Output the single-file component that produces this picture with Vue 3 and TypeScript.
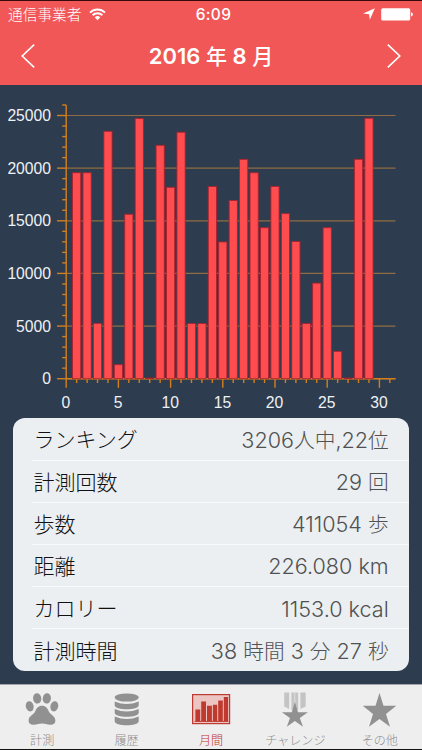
<script setup lang="ts">
interface Stat { label: string; value: string }
interface Run { text: string; latin: boolean }

const UNIT_X = 10.44
const UNIT_Y = 52.64 / 5000
const ORIGIN_X = 66.2
const ORIGIN_Y = 293.7

const steps: number[] = [
  19560, 19560, 5260, 23500, 1330, 15620, 24720, 60, 22170, 18180,
  23410, 5240, 5240, 18250, 12990, 16930, 20840, 19560, 14340, 18260,
  15680, 13030, 5240, 9080, 14340, 2600, 60, 20840, 24740,
]

const px = (day: number): number => ORIGIN_X + day * UNIT_X
const py = (count: number): number => ORIGIN_Y - count * UNIT_Y

const yMajor: number[] = [0, 5000, 10000, 15000, 20000, 25000]
const yMinor: number[] = Array.from({ length: 27 }, (_, i) => i * 1000).filter(v => v % 5000 !== 0)
const xMajor: number[] = [0, 5, 10, 15, 20, 25, 30]
const xMinor: number[] = Array.from({ length: 32 }, (_, i) => i).filter(v => v % 5 !== 0)

const stats: Stat[] = [
  { label: 'ランキング', value: '3206人中,22位' },
  { label: '計測回数', value: '29 回' },
  { label: '歩数', value: '411054 歩' },
  { label: '距離', value: '226.080 km' },
  { label: 'カロリー', value: '1153.0 kcal' },
  { label: '計測時間', value: '38 時間 3 分 27 秒' },
]

/** Splits a value into Latin and Japanese runs, which are set at different sizes. */
const runs = (value: string): Run[] =>
  (value.match(/[ -~]+|[^ -~]+/g) ?? []).map(text => ({ text, latin: /^[ -~]/.test(text) }))
</script>

<template>
  <div class="screen">
    <header class="header">
      <div class="status">
        <div class="carrier">
          <span>通信事業者</span>
          <svg class="wifi" width="17" height="13" viewBox="0 0 17 13">
            <path d="M1 4.6A10.6 10.6 0 0 1 16 4.6M3.6 7.3A7 7 0 0 1 13.4 7.3" fill="none" stroke="#fff" stroke-width="1.9" />
            <path d="M5.7 9.3A4 4 0 0 1 11.3 9.3L8.5 12.2Z" fill="#fff" />
          </svg>
        </div>
        <span class="clock">6:09</span>
        <div class="power">
          <svg width="12" height="12" viewBox="0 0 12 12"><path d="M11.9.2 6.8 11.8 6.1 6.2.1 5.5Z" fill="#fff" /></svg>
          <svg width="33" height="13" viewBox="0 0 33 13">
            <rect x="0.2" y="0.2" width="29" height="12.4" rx="1.6" fill="#fff" />
            <path d="M30 4.3Q31.9 4.8 31.9 6.4T30 8.5Z" fill="#fff" />
          </svg>
        </div>
      </div>
      <div class="nav">
        <svg width="14" height="24" viewBox="0 0 14 24"><path d="M13.2.6 1.2 12 13.2 23.4" fill="none" stroke="#fff" stroke-width="1.6" /></svg>
        <h1 class="title">2016 <span class="kanji">年</span> 8 <span class="kanji">月</span></h1>
        <svg width="14" height="24" viewBox="0 0 14 24"><path d="M.8.6 12.8 12 .8 23.4" fill="none" stroke="#fff" stroke-width="1.6" /></svg>
      </div>
    </header>

    <svg class="chart" width="422" height="333" viewBox="0 0 422 333">
      <g stroke="#8f6c43" stroke-width="1.2">
        <line v-for="v in yMajor" :key="v" :x1="ORIGIN_X" x2="395.5" :y1="py(v)" :y2="py(v)" />
      </g>
      <g stroke="#d27f1c" stroke-width="1.4">
        <line :x1="ORIGIN_X" :x2="ORIGIN_X" :y1="py(26000)" :y2="ORIGIN_Y" />
        <line :x1="ORIGIN_X" x2="395.5" :y1="ORIGIN_Y" :y2="ORIGIN_Y" />
        <line v-for="v in yMajor" :key="'y' + v" x1="57" :x2="ORIGIN_X" :y1="py(v)" :y2="py(v)" />
        <line v-for="v in yMinor" :key="'m' + v" x1="62.2" :x2="ORIGIN_X" :y1="py(v)" :y2="py(v)" />
        <line v-for="v in xMajor" :key="'x' + v" :x1="px(v)" :x2="px(v)" :y1="ORIGIN_Y" y2="302.8" />
        <line v-for="v in xMinor" :key="'n' + v" :x1="px(v)" :x2="px(v)" :y1="ORIGIN_Y" y2="298" />
      </g>
      <g fill="#ff4c4f" stroke="#a82431" stroke-width="0.9">
        <rect v-for="(v, i) in steps" :key="i" :x="px(i + 1) - 4.1" :y="py(v)" width="8.2" :height="v * UNIT_Y" />
      </g>
      <g class="axis" text-anchor="end">
        <text v-for="v in yMajor" :key="v" x="51" :y="py(v) + 5.7">{{ v }}</text>
      </g>
      <g class="axis" text-anchor="middle">
        <text v-for="v in xMajor" :key="v" :x="px(v) - 0.4" y="323.2">{{ v }}</text>
      </g>
    </svg>

    <section class="card">
      <div v-for="s in stats" :key="s.label" class="row">
        <span class="label">{{ s.label }}</span>
        <span class="value"><span v-for="(r, i) in runs(s.value)" :key="i" :class="{ latin: r.latin }">{{ r.text }}</span></span>
      </div>
    </section>

    <nav class="tabs">
      <div class="tab">
        <svg width="40" height="38" viewBox="0 0 40 38" fill="#919191">
          <ellipse cx="7.7" cy="17.3" rx="3.9" ry="5.2" transform="rotate(-14 7.7 17.3)" />
          <ellipse cx="15.2" cy="9.4" rx="4.1" ry="5.2" transform="rotate(-7 15.2 9.4)" />
          <ellipse cx="24.8" cy="9.4" rx="4.1" ry="5.2" transform="rotate(7 24.8 9.4)" />
          <ellipse cx="32.3" cy="17.3" rx="3.9" ry="5.2" transform="rotate(14 32.3 17.3)" />
          <path d="M20 16.8c3.6 0 5.5 2.4 6.7 5.5 1.5 3.6 6.7 4.6 6.7 9.2 0 3.1-2.4 4.6-5.5 4.3-3-.3-4.6-1.2-7.9-1.2s-4.9.9-7.9 1.2C9 36.1 6.6 34.6 6.6 31.5c0-4.6 5.2-5.6 6.7-9.2 1.2-3.1 3.1-5.5 6.7-5.5z" />
        </svg>
        <span>計測</span>
      </div>
      <div class="tab">
        <svg width="40" height="38" viewBox="0 0 40 38" fill="#919191">
          <ellipse cx="19.7" cy="8.5" rx="12" ry="4.1" />
          <path d="M7.7 12.4Q19.7 17.7 31.7 12.4V16.2C31.7 21.5 7.7 21.5 7.7 16.2Z" />
          <path d="M7.7 19.9Q19.7 25.2 31.7 19.9V23.7C31.7 29 7.7 29 7.7 23.7Z" />
          <path d="M7.7 27.4Q19.7 32.7 31.7 27.4V32.2C31.7 37.5 7.7 37.5 7.7 32.2Z" />
        </svg>
        <span>履歴</span>
      </div>
      <div class="tab active">
        <svg width="40" height="38" viewBox="0 0 40 38">
          <rect x="1.6" y="5.6" width="37" height="29" fill="#ecc5c3" stroke="#bd3a30" stroke-width="1.2" />
          <path d="M4.4 20.5H9.2V31.9H4.4ZM10.2 12.6H15V31.9H10.2ZM16 16.8H20.9V31.9H16ZM21.9 15.7H26.2V31.9H21.9ZM27.2 11.5H31.8V31.9H27.2ZM32.8 7.9H37.1V31.9H32.8Z" fill="#bf392e" />
          <path d="M3.6 32.4H37.4" stroke="#bf392e" stroke-width="1" />
        </svg>
        <span>月間</span>
      </div>
      <div class="tab">
        <svg width="40" height="38" viewBox="0 0 40 38">
          <path d="M9.2 3.4H14.2V20L9.2 17.5ZM16.4 3.4H23.2V21H16.4ZM25.4 3.4H30.7V17.5L25.4 20Z" fill="#c4c4c4" />
          <path d="M19.8 3.4V20" stroke="#e5e5e5" stroke-width=".8" />
          <path d="M19.9 13 23 23.2H32.9L24.8 29.1 28 37.8 19.9 32 11.8 37.8 15 29.1 6.9 23.2H16.8Z" fill="#919191" />
        </svg>
        <span>チャレンジ</span>
      </div>
      <div class="tab">
        <svg width="40" height="38" viewBox="0 0 40 38" fill="#919191">
          <path d="M19.5 4 23.5 16.7H36.3L26 24.9 30 37.7 19.5 29.9 9 37.7 13 24.9 2.7 16.7H15.5Z" />
        </svg>
        <span>その他</span>
      </div>
    </nav>
  </div>
</template>

<style>
body { margin: 0; background: #2d3c4e; }
</style>

<style scoped>
* { box-sizing: border-box; }
.screen {
  width: 422px;
  height: 750px;
  display: flex;
  flex-direction: column;
  overflow: hidden;
  background: #2d3c4e;
  font-family: Inter, "Noto Sans CJK JP", sans-serif;
}
svg { display: block; flex: none; }
.header {
  height: 85px;
  flex: none;
  background: #f15757;
  border-top: 1px solid #350b0e;
  color: #fff;
}
.status {
  height: 27px;
  display: grid;
  grid-template-columns: 1fr auto 1fr;
  align-items: center;
  padding: 0 8px;
  font-size: 14.7px;
  line-height: 25px;
}
.carrier { display: flex; align-items: center; gap: 8px; font-weight: 300; }
.carrier span { padding-top: 1px; }
.wifi { margin-bottom: 1px; }
.clock { padding: 0 0 0 5px; font-size: 15.5px; font-weight: 500; letter-spacing: 0.3px; }
.power { display: flex; justify-content: flex-end; align-items: center; gap: 6px; }
.power svg:first-child { margin-bottom: 1px; }
.power svg:last-child { margin-right: 0; }
.nav {
  height: 55px;
  display: flex;
  align-items: center;
  justify-content: space-between;
  padding: 0 21px;
}
.title { margin: 0; padding-top: 1px; font-size: 22px; line-height: 30px; font-weight: 600; white-space: nowrap; }
.kanji { font-size: 21px; font-weight: 500; }
.chart { height: 333px; }
.axis { font-family: "Liberation Sans", sans-serif; font-size: 15.7px; fill: #eef1f5; }
.card {
  height: 253px;
  flex: none;
  margin: 0 13.3px;
  margin-top: 0.4px;
  padding-left: 18.7px;
  border-radius: 12px;
  background: #ebeff1;
  display: grid;
  grid-template-rows: repeat(6, 1fr);
}
.row {
  display: flex;
  align-items: center;
  justify-content: space-between;
  padding: 3px 20px 0 0;
  border-bottom: 1px solid #f7f9fa;
  font-size: 20.7px;
  line-height: 30px;
  white-space: nowrap;
}
.row:last-child { border-bottom: 0; }
.label { padding-left: 1.5px; color: #111; font-weight: 300; font-size: 21px; }
.value { color: #505152; font-weight: 300; white-space: pre; }
.latin { font-size: 21.6px; font-weight: 350; }
.tabs {
  margin-top: auto;
  height: 66px;
  flex: none;
  display: grid;
  grid-template-columns: repeat(5, 1fr);
  border-top: 1px solid #9fa5ab;
  border-bottom: 1px solid #111;
  background: #eee;
}
.tab {
  display: flex;
  flex-direction: column;
  align-items: center;
  padding-top: 4px;
  color: #8f8f8f;
  font-size: 12.1px;
  line-height: 27px;
  font-weight: 300;
}
.active { color: #c3352b; }
</style>
